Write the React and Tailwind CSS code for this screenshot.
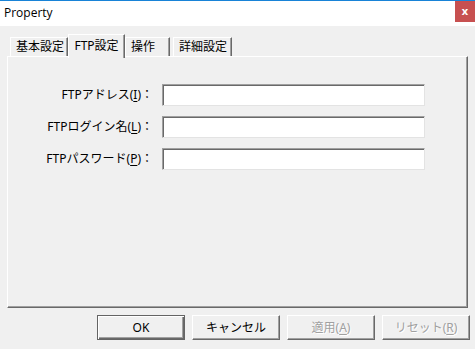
const font = { fontFamily: '"Noto Sans", "Noto Sans CJK JP", sans-serif' }

function U({ children }) {
  return <span className="underline underline-offset-2">{children}</span>
}

function Tab({ label, active, w }) {
  if (active) {
    return (
      <div className={'relative z-10 -mb-[1px] h-[24px] pt-[2px] bg-[#f0f0f0] border-t border-l border-white border-r border-r-[#696969] shadow-[inset_-1px_0_0_#a0a0a0] text-[12px] leading-[18px] text-black text-center ' + w}>
        {label}
      </div>
    )
  }
  return (
    <div className={'mt-[3px] h-[20px] pl-[5px] bg-[#f0f0f0] border-t border-l border-white border-r border-r-[#696969] shadow-[inset_-1px_0_0_#a0a0a0] text-[12px] leading-[18px] text-black ' + w}>
      {label}
    </div>
  )
}

function Field({ label }) {
  return (
    <div className="flex items-center h-[22px]">
      <div className="w-[147px] pr-[2px] text-right text-[12px] text-black">{label}</div>
      <div className="ml-[7px] w-[263px] h-[22px] bg-white border-t border-l border-[#a0a0a0] border-r border-b border-r-[#e3e3e3] border-b-[#e3e3e3] shadow-[inset_1px_1px_0_#696969]" />
    </div>
  )
}

function Btn({ children, disabled, def }) {
  return (
    <button
      className={
        def
          ? 'w-[88px] h-[25px] bg-[#f0f0f0] border border-[#646464] shadow-[inset_1px_1px_0_#fff,inset_-1px_-1px_0_#696969,inset_-2px_-2px_0_#a0a0a0] text-[12px] text-black'
          : disabled
          ? 'w-[88px] h-[25px] bg-[#f0f0f0] border-t border-l border-white border-r border-b border-r-[#696969] border-b-[#696969] shadow-[inset_-1px_-1px_0_#a0a0a0] text-[12px] text-[#a0a0a0] [text-shadow:1px_1px_0_#fff]'
          : 'w-[88px] h-[25px] bg-[#f0f0f0] border-t border-l border-white border-r border-b border-r-[#696969] border-b-[#696969] shadow-[inset_-1px_-1px_0_#a0a0a0] text-[12px] text-black'
      }
    >
      {children}
    </button>
  )
}

export default function App() {
  return (
    <div className="w-[475px] h-[349px] bg-[#f0f0f0] flex flex-col overflow-hidden" style={font}>
      {/* title bar */}
      <div className="h-[26px] bg-white border-t border-[#1883d7] flex justify-between">
        <div className="pl-[4px] pt-[4px] text-[12px] leading-[16px] text-black" style={{ fontFamily: '"Open Sans", "Noto Sans", sans-serif' }}>
          Property
        </div>
        <div className="w-[20px] h-[21px] bg-[#c75050] flex items-center justify-center text-white text-[11px] font-bold leading-none pb-[2px]">
          x
        </div>
      </div>

      {/* tabs */}
      <div className="mt-[8px] ml-[10px] flex items-start h-[22px]">
        <Tab label="基本設定" w="w-[58px]" />
        <Tab label="FTP設定" active w="w-[57px]" />
        <Tab label="操作" w="w-[45px]" />
        <div className="w-[3px]" />
        <Tab label="詳細設定" w="w-[59px]" />
      </div>

      {/* panel */}
      <div className="ml-[7px] w-[461px] h-[252px] border-t border-l border-white border-r border-b border-r-[#696969] border-b-[#696969] shadow-[inset_-1px_-1px_0_#a0a0a0] flex flex-col gap-[10px] pt-[27px]">
        <Field label={<>FTPアドレス(<U>I</U>)：</>} />
        <Field label={<>FTPログイン名(<U>L</U>)：</>} />
        <Field label={<>FTPパスワード(<U>P</U>)：</>} />
      </div>

      {/* buttons */}
      <div className="mt-[7px] ml-[97px] flex gap-[7px]">
        <Btn def>OK</Btn>
        <Btn>キャンセル</Btn>
        <Btn disabled>適用(<U>A</U>)</Btn>
        <Btn disabled>リセット(<U>R</U>)</Btn>
      </div>
    </div>
  )
}
